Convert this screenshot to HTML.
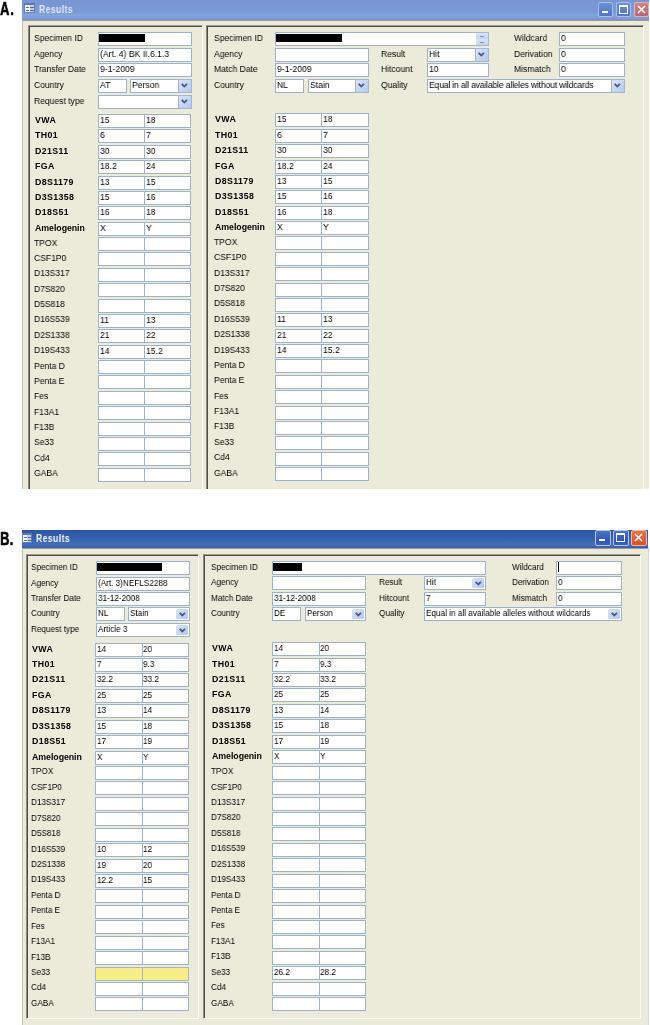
<!DOCTYPE html><html><head><meta charset="utf-8"><title>Results</title><style>
*{margin:0;padding:0;box-sizing:border-box}
html,body{width:650px;height:1025px;overflow:hidden;background:#fff;position:relative;font-family:"Liberation Sans", sans-serif}
.lb,.t,.ttext,.lab{will-change:transform}
div{position:absolute}
.title.inact{background:linear-gradient(#7896D2,#7A98D3 55%,#82A6DB 78%,#7A92D0)}
.title.act{background:linear-gradient(#2D55A6,#3762B0 50%,#4070B9 80%,#3A5EB0)}
.ttext{font-size:10px;font-weight:bold;white-space:nowrap;line-height:12px;transform:scaleX(0.86);transform-origin:0 0;letter-spacing:0.5px}
.inactt{color:#E2EAF8}
.actt{color:#F6F8FC}
.body{background:#ECEBDA;border-top:1px solid #9C9A8C;border-left:1px solid #C4C2B8}
.panel{border-left:1px solid #8A887C;border-top:1px solid #A09E91;border-right:1px solid #FCFCF8;border-bottom:1px solid #FCFCF8;box-shadow:inset 1px 1px 0 #4F4D45}
.lb{font-size:9.2px;color:#000;white-space:nowrap;line-height:10px;transform-origin:0 0}
.lb.b{font-weight:bold;color:#000;font-size:8.8px;letter-spacing:0.35px}
.bx{background:#fff;border:1px solid #9DB2CB;font-size:9.5px;line-height:10px;color:#000;white-space:nowrap}
.t{position:absolute;left:0.5px;top:0px;transform:scaleX(0.91);transform-origin:0 0}
.t.t2{transform:scaleX(0.86)}
.bx.yel{background:#F6EE88;border-color:#A9B5B8}
.red{position:absolute;left:0px;top:1px;height:8px;background:#000}
.dd{right:-1px;top:-1px;width:14px;bottom:-1px;background:linear-gradient(135deg,#DCE5F7,#C3D3F0 60%,#B5CAEE);border:1px solid #A3B7D2;border-radius:1px}
.dd .chev{position:absolute;left:2.3px;top:2.5px}
.dd.t2{right:1px;top:1px;width:12px;bottom:1px;border:none;border-radius:1.5px}
.dd.t2 .chev{left:2.9px;top:2.5px}
.spin{right:-1px;top:-1px;width:13px;bottom:-1px;border:1px solid #A5B9D3;border-left:none}
.spin div{position:absolute;left:0;width:12px;height:6px;background:linear-gradient(#DCE5F6,#C4D3EE)}
.spin div:first-child{top:0}
.spin div:last-child{top:6px}
.spin i{position:absolute;left:4px;top:2.5px;width:4px;height:1px;background:#7E8DB3}
.cur{position:absolute;left:1px;top:0px;width:1.2px;height:10px;background:#000}
.tb{border-radius:2px}
.bmin,.bmax{background:linear-gradient(#6D8ED8,#5275C8);border:1px solid #A9BEEA}
.bclose{background:linear-gradient(#D0848B,#BC6570);border:1px solid #E2B0B6}
.bmin.a,.bmax.a{background:linear-gradient(#4A72CC,#2F58B5 70%,#3A62BC);border:1px solid #B5C6EA}
.bclose.a{background:linear-gradient(#EC7045,#D9502A);border:1px solid #F2B8A0}
.gmin{left:2.8px;top:8px;width:6px;height:2px;background:#fff}
.gmax{left:2.3px;top:2px;width:9px;height:9px;border:1px solid #fff;border-top-width:2px}
.ico{height:10px;background:linear-gradient(90deg,#F2F5FA 50%,#C4CCDA 50%);border:1px solid #6580BE;border-top:2px solid #5A78C0}
.ico div{position:absolute;height:1px;background:#5A6A90}
.i1{left:1px;top:2px;width:3px} .i2{left:5px;top:2px;width:4px} .i3{left:1px;top:5px;width:3px} .i4{left:5px;top:5px;width:4px}
.lab{font-size:18px;font-weight:bold;color:#000;transform:scaleX(0.72);transform-origin:0 0;line-height:20px;letter-spacing:1.2px;-webkit-text-stroke:0.5px #000}
</style></head><body>
<div class="lab" style="left:-0.5px;top:-0.8px">A.</div>
<div class="lab" style="left:-0.3px;top:528.7px;letter-spacing:0.6px">B.</div>
<div class="title inact" style="left:22px;top:0px;width:627px;height:20px"></div>
<div class="ttext inactt" style="left:39px;top:3.5px">Results</div>
<div class="ico" style="left:24px;top:3px;width:11px"><div class="i1"></div><div class="i2"></div><div class="i3"></div><div class="i4"></div></div>
<div class="body" style="left:22px;top:20px;width:627px;height:469px;"></div>
<div class="panel" style="left:28px;top:25px;width:175px;height:464px;border-bottom:none"></div>
<div class="panel" style="left:206px;top:25px;width:438px;height:464px;border-bottom:none"></div>
<div class="lb" style="left:33.8px;top:32.5px;transform:scaleX(0.93);">Specimen ID</div>
<div class="lb" style="left:33.8px;top:48.5px;transform:scaleX(0.93);">Agency</div>
<div class="lb" style="left:33.8px;top:63.5px;transform:scaleX(0.93);">Transfer Date</div>
<div class="lb" style="left:33.8px;top:79.5px;transform:scaleX(0.93);">Country</div>
<div class="lb" style="left:33.8px;top:95.5px;transform:scaleX(0.93);">Request type</div>
<div class="bx" style="left:98px;top:32px;width:94px;height:14px;"><div class="red" style="width:46px"></div></div>
<div class="bx" style="left:98px;top:48px;width:94px;height:14px;"><span class="t">(Art. 4) BK II.6.1.3</span></div>
<div class="bx" style="left:98px;top:63px;width:94px;height:14px;"><span class="t">9-1-2009</span></div>
<div class="bx" style="left:98px;top:79px;width:29px;height:14px;"><span class="t">AT</span></div>
<div class="bx" style="left:130px;top:79px;width:62px;height:14px"><span class="t">Person</span><div class="dd"><svg width="8" height="6" viewBox="0 0 8 6" class="chev"><path d="M0.6 0.8 L3.3 3.5 L6 0.8" stroke="#4A5B80" stroke-width="1.8" fill="none"/></svg></div></div>
<div class="bx" style="left:98px;top:95px;width:94px;height:14px"><div class="dd"><svg width="8" height="6" viewBox="0 0 8 6" class="chev"><path d="M0.6 0.8 L3.3 3.5 L6 0.8" stroke="#4A5B80" stroke-width="1.8" fill="none"/></svg></div></div>
<div class="lb" style="left:213.8px;top:32.5px;transform:scaleX(0.93);">Specimen ID</div>
<div class="lb" style="left:213.8px;top:48.5px;transform:scaleX(0.93);">Agency</div>
<div class="lb" style="left:213.8px;top:63.5px;transform:scaleX(0.93);">Match Date</div>
<div class="lb" style="left:213.8px;top:79.5px;transform:scaleX(0.93);">Country</div>
<div class="bx" style="left:275px;top:32px;width:214px;height:14px;"><div class="red" style="width:66px"></div><div class="spin"><div><i></i></div><div><i></i></div></div></div>
<div class="bx" style="left:275px;top:48px;width:94px;height:14px;"></div>
<div class="bx" style="left:275px;top:63px;width:94px;height:14px;"><span class="t">9-1-2009</span></div>
<div class="bx" style="left:275px;top:79px;width:29px;height:14px;"><span class="t">NL</span></div>
<div class="bx" style="left:308px;top:79px;width:61px;height:14px"><span class="t">Stain</span><div class="dd"><svg width="8" height="6" viewBox="0 0 8 6" class="chev"><path d="M0.6 0.8 L3.3 3.5 L6 0.8" stroke="#4A5B80" stroke-width="1.8" fill="none"/></svg></div></div>
<div class="lb" style="left:381px;top:48.5px;transform:scaleX(0.93);">Result</div>
<div class="lb" style="left:381px;top:63.5px;transform:scaleX(0.93);">Hitcount</div>
<div class="lb" style="left:381px;top:79.5px;transform:scaleX(0.93);">Quality</div>
<div class="bx" style="left:427px;top:48px;width:62px;height:14px"><span class="t">Hit</span><div class="dd"><svg width="8" height="6" viewBox="0 0 8 6" class="chev"><path d="M0.6 0.8 L3.3 3.5 L6 0.8" stroke="#4A5B80" stroke-width="1.8" fill="none"/></svg></div></div>
<div class="bx" style="left:427px;top:63px;width:62px;height:14px;"><span class="t">10</span></div>
<div class="bx" style="left:427px;top:79px;width:198px;height:14px"><span class="t"><span style="letter-spacing:-0.22px">Equal in all available alleles without wildcards</span></span><div class="dd"><svg width="8" height="6" viewBox="0 0 8 6" class="chev"><path d="M0.6 0.8 L3.3 3.5 L6 0.8" stroke="#4A5B80" stroke-width="1.8" fill="none"/></svg></div></div>
<div class="lb" style="left:514px;top:32.5px;transform:scaleX(0.93);">Wildcard</div>
<div class="lb" style="left:514px;top:48.5px;transform:scaleX(0.93);">Derivation</div>
<div class="lb" style="left:514px;top:63.5px;transform:scaleX(0.93);">Mismatch</div>
<div class="bx" style="left:559px;top:32px;width:66px;height:14px;"><span class="t">0</span></div>
<div class="bx" style="left:559px;top:48px;width:66px;height:14px;"><span class="t">0</span></div>
<div class="bx" style="left:559px;top:63px;width:66px;height:14px;"><span class="t">0</span></div>
<div class="lb b" style="left:34.5px;top:115.0px;">VWA</div>
<div class="bx" style="left:98px;top:114.0px;width:47px;height:14.0px;"><span class="t">15</span></div>
<div class="bx" style="left:144px;top:114.0px;width:47px;height:14.0px;"><span class="t">18</span></div>
<div class="lb b" style="left:214.5px;top:114.4px;">VWA</div>
<div class="bx" style="left:275px;top:113.4px;width:47px;height:14.0px;"><span class="t">15</span></div>
<div class="bx" style="left:321px;top:113.4px;width:48px;height:14.0px;"><span class="t">18</span></div>
<div class="lb b" style="left:34.5px;top:130.38px;">TH01</div>
<div class="bx" style="left:98px;top:129.38px;width:47px;height:14.0px;"><span class="t">6</span></div>
<div class="bx" style="left:144px;top:129.38px;width:47px;height:14.0px;"><span class="t">7</span></div>
<div class="lb b" style="left:214.5px;top:129.78px;">TH01</div>
<div class="bx" style="left:275px;top:128.78px;width:47px;height:14.0px;"><span class="t">6</span></div>
<div class="bx" style="left:321px;top:128.78px;width:48px;height:14.0px;"><span class="t">7</span></div>
<div class="lb b" style="left:34.5px;top:145.75px;">D21S11</div>
<div class="bx" style="left:98px;top:144.75px;width:47px;height:14.0px;"><span class="t">30</span></div>
<div class="bx" style="left:144px;top:144.75px;width:47px;height:14.0px;"><span class="t">30</span></div>
<div class="lb b" style="left:214.5px;top:145.15px;">D21S11</div>
<div class="bx" style="left:275px;top:144.15px;width:47px;height:14.0px;"><span class="t">30</span></div>
<div class="bx" style="left:321px;top:144.15px;width:48px;height:14.0px;"><span class="t">30</span></div>
<div class="lb b" style="left:34.5px;top:161.12px;">FGA</div>
<div class="bx" style="left:98px;top:160.12px;width:47px;height:14.0px;"><span class="t">18.2</span></div>
<div class="bx" style="left:144px;top:160.12px;width:47px;height:14.0px;"><span class="t">24</span></div>
<div class="lb b" style="left:214.5px;top:160.53px;">FGA</div>
<div class="bx" style="left:275px;top:159.53px;width:47px;height:14.0px;"><span class="t">18.2</span></div>
<div class="bx" style="left:321px;top:159.53px;width:48px;height:14.0px;"><span class="t">24</span></div>
<div class="lb b" style="left:34.5px;top:176.5px;">D8S1179</div>
<div class="bx" style="left:98px;top:175.5px;width:47px;height:14.0px;"><span class="t">13</span></div>
<div class="bx" style="left:144px;top:175.5px;width:47px;height:14.0px;"><span class="t">15</span></div>
<div class="lb b" style="left:214.5px;top:175.9px;">D8S1179</div>
<div class="bx" style="left:275px;top:174.9px;width:47px;height:14.0px;"><span class="t">13</span></div>
<div class="bx" style="left:321px;top:174.9px;width:48px;height:14.0px;"><span class="t">15</span></div>
<div class="lb b" style="left:34.5px;top:191.88px;">D3S1358</div>
<div class="bx" style="left:98px;top:190.88px;width:47px;height:14.0px;"><span class="t">15</span></div>
<div class="bx" style="left:144px;top:190.88px;width:47px;height:14.0px;"><span class="t">16</span></div>
<div class="lb b" style="left:214.5px;top:191.28px;">D3S1358</div>
<div class="bx" style="left:275px;top:190.28px;width:47px;height:14.0px;"><span class="t">15</span></div>
<div class="bx" style="left:321px;top:190.28px;width:48px;height:14.0px;"><span class="t">16</span></div>
<div class="lb b" style="left:34.5px;top:207.25px;">D18S51</div>
<div class="bx" style="left:98px;top:206.25px;width:47px;height:14.0px;"><span class="t">16</span></div>
<div class="bx" style="left:144px;top:206.25px;width:47px;height:14.0px;"><span class="t">18</span></div>
<div class="lb b" style="left:214.5px;top:206.65px;">D18S51</div>
<div class="bx" style="left:275px;top:205.65px;width:47px;height:14.0px;"><span class="t">16</span></div>
<div class="bx" style="left:321px;top:205.65px;width:48px;height:14.0px;"><span class="t">18</span></div>
<div class="lb b" style="left:34.5px;top:222.62px;letter-spacing:-0.05px;">Amelogenin</div>
<div class="bx" style="left:98px;top:221.62px;width:47px;height:14.0px;"><span class="t">X</span></div>
<div class="bx" style="left:144px;top:221.62px;width:47px;height:14.0px;"><span class="t">Y</span></div>
<div class="lb b" style="left:214.5px;top:222.03px;letter-spacing:-0.05px;">Amelogenin</div>
<div class="bx" style="left:275px;top:221.03px;width:47px;height:14.0px;"><span class="t">X</span></div>
<div class="bx" style="left:321px;top:221.03px;width:48px;height:14.0px;"><span class="t">Y</span></div>
<div class="lb" style="left:33.8px;top:237.5px;transform:scaleX(0.93);">TPOX</div>
<div class="bx" style="left:98px;top:237.0px;width:47px;height:14.0px;"></div>
<div class="bx" style="left:144px;top:237.0px;width:47px;height:14.0px;"></div>
<div class="lb" style="left:213.8px;top:236.9px;transform:scaleX(0.93);">TPOX</div>
<div class="bx" style="left:275px;top:236.4px;width:47px;height:14.0px;"></div>
<div class="bx" style="left:321px;top:236.4px;width:48px;height:14.0px;"></div>
<div class="lb" style="left:33.8px;top:252.88px;transform:scaleX(0.93);">CSF1P0</div>
<div class="bx" style="left:98px;top:252.38px;width:47px;height:14.0px;"></div>
<div class="bx" style="left:144px;top:252.38px;width:47px;height:14.0px;"></div>
<div class="lb" style="left:213.8px;top:252.28px;transform:scaleX(0.93);">CSF1P0</div>
<div class="bx" style="left:275px;top:251.78px;width:47px;height:14.0px;"></div>
<div class="bx" style="left:321px;top:251.78px;width:48px;height:14.0px;"></div>
<div class="lb" style="left:33.8px;top:268.25px;transform:scaleX(0.93);">D13S317</div>
<div class="bx" style="left:98px;top:267.75px;width:47px;height:14.0px;"></div>
<div class="bx" style="left:144px;top:267.75px;width:47px;height:14.0px;"></div>
<div class="lb" style="left:213.8px;top:267.65px;transform:scaleX(0.93);">D13S317</div>
<div class="bx" style="left:275px;top:267.15px;width:47px;height:14.0px;"></div>
<div class="bx" style="left:321px;top:267.15px;width:48px;height:14.0px;"></div>
<div class="lb" style="left:33.8px;top:283.62px;transform:scaleX(0.93);">D7S820</div>
<div class="bx" style="left:98px;top:283.12px;width:47px;height:14.0px;"></div>
<div class="bx" style="left:144px;top:283.12px;width:47px;height:14.0px;"></div>
<div class="lb" style="left:213.8px;top:283.02px;transform:scaleX(0.93);">D7S820</div>
<div class="bx" style="left:275px;top:282.52px;width:47px;height:14.0px;"></div>
<div class="bx" style="left:321px;top:282.52px;width:48px;height:14.0px;"></div>
<div class="lb" style="left:33.8px;top:299.0px;transform:scaleX(0.93);">D5S818</div>
<div class="bx" style="left:98px;top:298.5px;width:47px;height:14.0px;"></div>
<div class="bx" style="left:144px;top:298.5px;width:47px;height:14.0px;"></div>
<div class="lb" style="left:213.8px;top:298.4px;transform:scaleX(0.93);">D5S818</div>
<div class="bx" style="left:275px;top:297.9px;width:47px;height:14.0px;"></div>
<div class="bx" style="left:321px;top:297.9px;width:48px;height:14.0px;"></div>
<div class="lb" style="left:33.8px;top:314.38px;transform:scaleX(0.93);">D16S539</div>
<div class="bx" style="left:98px;top:313.88px;width:47px;height:14.0px;"><span class="t">11</span></div>
<div class="bx" style="left:144px;top:313.88px;width:47px;height:14.0px;"><span class="t">13</span></div>
<div class="lb" style="left:213.8px;top:313.77px;transform:scaleX(0.93);">D16S539</div>
<div class="bx" style="left:275px;top:313.27px;width:47px;height:14.0px;"><span class="t">11</span></div>
<div class="bx" style="left:321px;top:313.27px;width:48px;height:14.0px;"><span class="t">13</span></div>
<div class="lb" style="left:33.8px;top:329.75px;transform:scaleX(0.93);">D2S1338</div>
<div class="bx" style="left:98px;top:329.25px;width:47px;height:14.0px;"><span class="t">21</span></div>
<div class="bx" style="left:144px;top:329.25px;width:47px;height:14.0px;"><span class="t">22</span></div>
<div class="lb" style="left:213.8px;top:329.15px;transform:scaleX(0.93);">D2S1338</div>
<div class="bx" style="left:275px;top:328.65px;width:47px;height:14.0px;"><span class="t">21</span></div>
<div class="bx" style="left:321px;top:328.65px;width:48px;height:14.0px;"><span class="t">22</span></div>
<div class="lb" style="left:33.8px;top:345.12px;transform:scaleX(0.93);">D19S433</div>
<div class="bx" style="left:98px;top:344.62px;width:47px;height:14.0px;"><span class="t">14</span></div>
<div class="bx" style="left:144px;top:344.62px;width:47px;height:14.0px;"><span class="t">15.2</span></div>
<div class="lb" style="left:213.8px;top:344.52px;transform:scaleX(0.93);">D19S433</div>
<div class="bx" style="left:275px;top:344.02px;width:47px;height:14.0px;"><span class="t">14</span></div>
<div class="bx" style="left:321px;top:344.02px;width:48px;height:14.0px;"><span class="t">15.2</span></div>
<div class="lb" style="left:33.8px;top:360.5px;transform:scaleX(0.93);">Penta D</div>
<div class="bx" style="left:98px;top:360.0px;width:47px;height:14.0px;"></div>
<div class="bx" style="left:144px;top:360.0px;width:47px;height:14.0px;"></div>
<div class="lb" style="left:213.8px;top:359.9px;transform:scaleX(0.93);">Penta D</div>
<div class="bx" style="left:275px;top:359.4px;width:47px;height:14.0px;"></div>
<div class="bx" style="left:321px;top:359.4px;width:48px;height:14.0px;"></div>
<div class="lb" style="left:33.8px;top:375.88px;transform:scaleX(0.93);">Penta E</div>
<div class="bx" style="left:98px;top:375.38px;width:47px;height:14.0px;"></div>
<div class="bx" style="left:144px;top:375.38px;width:47px;height:14.0px;"></div>
<div class="lb" style="left:213.8px;top:375.27px;transform:scaleX(0.93);">Penta E</div>
<div class="bx" style="left:275px;top:374.77px;width:47px;height:14.0px;"></div>
<div class="bx" style="left:321px;top:374.77px;width:48px;height:14.0px;"></div>
<div class="lb" style="left:33.8px;top:391.25px;transform:scaleX(0.93);">Fes</div>
<div class="bx" style="left:98px;top:390.75px;width:47px;height:14.0px;"></div>
<div class="bx" style="left:144px;top:390.75px;width:47px;height:14.0px;"></div>
<div class="lb" style="left:213.8px;top:390.65px;transform:scaleX(0.93);">Fes</div>
<div class="bx" style="left:275px;top:390.15px;width:47px;height:14.0px;"></div>
<div class="bx" style="left:321px;top:390.15px;width:48px;height:14.0px;"></div>
<div class="lb" style="left:33.8px;top:406.62px;transform:scaleX(0.93);">F13A1</div>
<div class="bx" style="left:98px;top:406.12px;width:47px;height:14.0px;"></div>
<div class="bx" style="left:144px;top:406.12px;width:47px;height:14.0px;"></div>
<div class="lb" style="left:213.8px;top:406.02px;transform:scaleX(0.93);">F13A1</div>
<div class="bx" style="left:275px;top:405.52px;width:47px;height:14.0px;"></div>
<div class="bx" style="left:321px;top:405.52px;width:48px;height:14.0px;"></div>
<div class="lb" style="left:33.8px;top:422.0px;transform:scaleX(0.93);">F13B</div>
<div class="bx" style="left:98px;top:421.5px;width:47px;height:14.0px;"></div>
<div class="bx" style="left:144px;top:421.5px;width:47px;height:14.0px;"></div>
<div class="lb" style="left:213.8px;top:421.4px;transform:scaleX(0.93);">F13B</div>
<div class="bx" style="left:275px;top:420.9px;width:47px;height:14.0px;"></div>
<div class="bx" style="left:321px;top:420.9px;width:48px;height:14.0px;"></div>
<div class="lb" style="left:33.8px;top:437.38px;transform:scaleX(0.93);">Se33</div>
<div class="bx" style="left:98px;top:436.88px;width:47px;height:14.0px;"></div>
<div class="bx" style="left:144px;top:436.88px;width:47px;height:14.0px;"></div>
<div class="lb" style="left:213.8px;top:436.77px;transform:scaleX(0.93);">Se33</div>
<div class="bx" style="left:275px;top:436.27px;width:47px;height:14.0px;"></div>
<div class="bx" style="left:321px;top:436.27px;width:48px;height:14.0px;"></div>
<div class="lb" style="left:33.8px;top:452.75px;transform:scaleX(0.93);">Cd4</div>
<div class="bx" style="left:98px;top:452.25px;width:47px;height:14.0px;"></div>
<div class="bx" style="left:144px;top:452.25px;width:47px;height:14.0px;"></div>
<div class="lb" style="left:213.8px;top:452.15px;transform:scaleX(0.93);">Cd4</div>
<div class="bx" style="left:275px;top:451.65px;width:47px;height:14.0px;"></div>
<div class="bx" style="left:321px;top:451.65px;width:48px;height:14.0px;"></div>
<div class="lb" style="left:33.8px;top:468.12px;transform:scaleX(0.93);">GABA</div>
<div class="bx" style="left:98px;top:467.62px;width:47px;height:14.0px;"></div>
<div class="bx" style="left:144px;top:467.62px;width:47px;height:14.0px;"></div>
<div class="lb" style="left:213.8px;top:467.52px;transform:scaleX(0.93);">GABA</div>
<div class="bx" style="left:275px;top:467.02px;width:47px;height:14.0px;"></div>
<div class="bx" style="left:321px;top:467.02px;width:48px;height:14.0px;"></div>
<div class="tb bmin" style="left:598px;top:2px;width:15px;height:15px"><div class="gmin"></div></div>
<div class="tb bmax" style="left:616px;top:2px;width:15px;height:15px"><div class="gmax"></div></div>
<div class="tb bclose" style="left:634px;top:2px;width:15px;height:15px"><svg width="15" height="15" viewBox="0 0 15 15" style="position:absolute;left:-1px;top:-1px"><path d="M4 4 L11 11 M11 4 L4 11" stroke="#fff" stroke-width="1.6"/></svg></div>
<div class="title act" style="left:22px;top:530px;width:626px;height:18px"></div>
<div class="ttext actt" style="left:36px;top:533px">Results</div>
<div class="ico" style="left:22px;top:533px;width:10px"><div class="i1"></div><div class="i2"></div><div class="i3"></div><div class="i4"></div></div>
<div class="body" style="left:22px;top:548px;width:627px;height:477px;border-right:1px solid #D3DCEE;"></div>
<div class="panel" style="left:26px;top:554px;width:173px;height:465px;"></div>
<div class="panel" style="left:203px;top:554px;width:438px;height:465px;"></div>
<div class="lb" style="left:31.3px;top:561.5px;transform:scaleX(0.89);">Specimen ID</div>
<div class="lb" style="left:31.3px;top:577.5px;transform:scaleX(0.89);">Agency</div>
<div class="lb" style="left:31.3px;top:592.5px;transform:scaleX(0.89);">Transfer Date</div>
<div class="lb" style="left:31.3px;top:607.7px;transform:scaleX(0.89);">Country</div>
<div class="lb" style="left:31.3px;top:623.7px;transform:scaleX(0.89);">Request type</div>
<div class="bx" style="left:96px;top:561px;width:94px;height:14px;"><div class="red" style="width:65px"></div></div>
<div class="bx" style="left:96px;top:577px;width:94px;height:14px;"><span class="t t2">(Art. 3)NEFLS2288</span></div>
<div class="bx" style="left:96px;top:592px;width:94px;height:14px;"><span class="t t2">31-12-2008</span></div>
<div class="bx" style="left:96px;top:607.2px;width:29px;height:14.0px;"><span class="t t2">NL</span></div>
<div class="bx" style="left:128px;top:607.2px;width:62px;height:14.0px"><span class="t t2">Stain</span><div class="dd t2"><svg width="8" height="6" viewBox="0 0 8 6" class="chev"><path d="M0.6 0.8 L3.3 3.5 L6 0.8" stroke="#4A5B80" stroke-width="1.8" fill="none"/></svg></div></div>
<div class="bx" style="left:96px;top:623.2px;width:94px;height:14.0px"><span class="t t2">Article 3</span><div class="dd t2"><svg width="8" height="6" viewBox="0 0 8 6" class="chev"><path d="M0.6 0.8 L3.3 3.5 L6 0.8" stroke="#4A5B80" stroke-width="1.8" fill="none"/></svg></div></div>
<div class="lb" style="left:210.8px;top:561.5px;transform:scaleX(0.89);">Specimen ID</div>
<div class="lb" style="left:210.8px;top:576.7px;transform:scaleX(0.89);">Agency</div>
<div class="lb" style="left:210.8px;top:592.5px;transform:scaleX(0.89);">Match Date</div>
<div class="lb" style="left:210.8px;top:607.8px;transform:scaleX(0.89);">Country</div>
<div class="bx" style="left:272px;top:561px;width:214px;height:14px;"><div class="red" style="width:29px"></div></div>
<div class="bx" style="left:272px;top:576.2px;width:94px;height:14.0px;"></div>
<div class="bx" style="left:272px;top:592px;width:94px;height:14px;"><span class="t t2">31-12-2008</span></div>
<div class="bx" style="left:272px;top:607.3px;width:29px;height:14.0px;"><span class="t t2">DE</span></div>
<div class="bx" style="left:305px;top:607.3px;width:61px;height:14.0px"><span class="t t2">Person</span><div class="dd t2"><svg width="8" height="6" viewBox="0 0 8 6" class="chev"><path d="M0.6 0.8 L3.3 3.5 L6 0.8" stroke="#4A5B80" stroke-width="1.8" fill="none"/></svg></div></div>
<div class="lb" style="left:379px;top:576.7px;transform:scaleX(0.89);">Result</div>
<div class="lb" style="left:379px;top:592.5px;transform:scaleX(0.89);">Hitcount</div>
<div class="lb" style="left:379px;top:607.8px;transform:scaleX(0.89);">Quality</div>
<div class="bx" style="left:424px;top:576.2px;width:62px;height:14.0px"><span class="t t2">Hit</span><div class="dd t2"><svg width="8" height="6" viewBox="0 0 8 6" class="chev"><path d="M0.6 0.8 L3.3 3.5 L6 0.8" stroke="#4A5B80" stroke-width="1.8" fill="none"/></svg></div></div>
<div class="bx" style="left:424px;top:592px;width:62px;height:14px;"><span class="t t2">7</span></div>
<div class="bx" style="left:424px;top:607.3px;width:198px;height:14.0px"><span class="t t2">Equal in all available alleles without wildcards</span><div class="dd t2"><svg width="8" height="6" viewBox="0 0 8 6" class="chev"><path d="M0.6 0.8 L3.3 3.5 L6 0.8" stroke="#4A5B80" stroke-width="1.8" fill="none"/></svg></div></div>
<div class="lb" style="left:511.5px;top:561.5px;transform:scaleX(0.89);">Wildcard</div>
<div class="lb" style="left:511.5px;top:576.7px;transform:scaleX(0.89);">Derivation</div>
<div class="lb" style="left:511.5px;top:592.5px;transform:scaleX(0.89);">Mismatch</div>
<div class="bx" style="left:556px;top:561px;width:66px;height:14px;"><span class="cur"></span></div>
<div class="bx" style="left:556px;top:576.2px;width:66px;height:14.0px;"><span class="t t2">0</span></div>
<div class="bx" style="left:556px;top:592px;width:66px;height:14px;"><span class="t t2">0</span></div>
<div class="lb b" style="left:32.0px;top:643.5px;">VWA</div>
<div class="bx" style="left:95px;top:642.5px;width:47.6px;height:14.0px;"><span class="t t2">14</span></div>
<div class="bx" style="left:141.6px;top:642.5px;width:47.4px;height:14.0px;"><span class="t t2">20</span></div>
<div class="lb b" style="left:211.5px;top:643.2px;">VWA</div>
<div class="bx" style="left:272px;top:642.2px;width:47.5px;height:14.0px;"><span class="t t2">14</span></div>
<div class="bx" style="left:318.5px;top:642.2px;width:47.0px;height:14.0px;"><span class="t t2">20</span></div>
<div class="lb b" style="left:32.0px;top:658.93px;">TH01</div>
<div class="bx" style="left:95px;top:657.93px;width:47.6px;height:14.0px;"><span class="t t2">7</span></div>
<div class="bx" style="left:141.6px;top:657.93px;width:47.4px;height:14.0px;"><span class="t t2">9.3</span></div>
<div class="lb b" style="left:211.5px;top:658.63px;">TH01</div>
<div class="bx" style="left:272px;top:657.63px;width:47.5px;height:14.0px;"><span class="t t2">7</span></div>
<div class="bx" style="left:318.5px;top:657.63px;width:47.0px;height:14.0px;"><span class="t t2">9.3</span></div>
<div class="lb b" style="left:32.0px;top:674.36px;">D21S11</div>
<div class="bx" style="left:95px;top:673.36px;width:47.6px;height:14.0px;"><span class="t t2">32.2</span></div>
<div class="bx" style="left:141.6px;top:673.36px;width:47.4px;height:14.0px;"><span class="t t2">33.2</span></div>
<div class="lb b" style="left:211.5px;top:674.06px;">D21S11</div>
<div class="bx" style="left:272px;top:673.06px;width:47.5px;height:14.0px;"><span class="t t2">32.2</span></div>
<div class="bx" style="left:318.5px;top:673.06px;width:47.0px;height:14.0px;"><span class="t t2">33.2</span></div>
<div class="lb b" style="left:32.0px;top:689.79px;">FGA</div>
<div class="bx" style="left:95px;top:688.79px;width:47.6px;height:14.0px;"><span class="t t2">25</span></div>
<div class="bx" style="left:141.6px;top:688.79px;width:47.4px;height:14.0px;"><span class="t t2">25</span></div>
<div class="lb b" style="left:211.5px;top:689.49px;">FGA</div>
<div class="bx" style="left:272px;top:688.49px;width:47.5px;height:14.0px;"><span class="t t2">25</span></div>
<div class="bx" style="left:318.5px;top:688.49px;width:47.0px;height:14.0px;"><span class="t t2">25</span></div>
<div class="lb b" style="left:32.0px;top:705.22px;">D8S1179</div>
<div class="bx" style="left:95px;top:704.22px;width:47.6px;height:14.0px;"><span class="t t2">13</span></div>
<div class="bx" style="left:141.6px;top:704.22px;width:47.4px;height:14.0px;"><span class="t t2">14</span></div>
<div class="lb b" style="left:211.5px;top:704.92px;">D8S1179</div>
<div class="bx" style="left:272px;top:703.92px;width:47.5px;height:14.0px;"><span class="t t2">13</span></div>
<div class="bx" style="left:318.5px;top:703.92px;width:47.0px;height:14.0px;"><span class="t t2">14</span></div>
<div class="lb b" style="left:32.0px;top:720.65px;">D3S1358</div>
<div class="bx" style="left:95px;top:719.65px;width:47.6px;height:14.0px;"><span class="t t2">15</span></div>
<div class="bx" style="left:141.6px;top:719.65px;width:47.4px;height:14.0px;"><span class="t t2">18</span></div>
<div class="lb b" style="left:211.5px;top:720.35px;">D3S1358</div>
<div class="bx" style="left:272px;top:719.35px;width:47.5px;height:14.0px;"><span class="t t2">15</span></div>
<div class="bx" style="left:318.5px;top:719.35px;width:47.0px;height:14.0px;"><span class="t t2">18</span></div>
<div class="lb b" style="left:32.0px;top:736.08px;">D18S51</div>
<div class="bx" style="left:95px;top:735.08px;width:47.6px;height:14.0px;"><span class="t t2">17</span></div>
<div class="bx" style="left:141.6px;top:735.08px;width:47.4px;height:14.0px;"><span class="t t2">19</span></div>
<div class="lb b" style="left:211.5px;top:735.78px;">D18S51</div>
<div class="bx" style="left:272px;top:734.78px;width:47.5px;height:14.0px;"><span class="t t2">17</span></div>
<div class="bx" style="left:318.5px;top:734.78px;width:47.0px;height:14.0px;"><span class="t t2">19</span></div>
<div class="lb b" style="left:32.0px;top:751.51px;letter-spacing:-0.05px;">Amelogenin</div>
<div class="bx" style="left:95px;top:750.51px;width:47.6px;height:14.0px;"><span class="t t2">X</span></div>
<div class="bx" style="left:141.6px;top:750.51px;width:47.4px;height:14.0px;"><span class="t t2">Y</span></div>
<div class="lb b" style="left:211.5px;top:751.21px;letter-spacing:-0.05px;">Amelogenin</div>
<div class="bx" style="left:272px;top:750.21px;width:47.5px;height:14.0px;"><span class="t t2">X</span></div>
<div class="bx" style="left:318.5px;top:750.21px;width:47.0px;height:14.0px;"><span class="t t2">Y</span></div>
<div class="lb" style="left:31.3px;top:766.44px;transform:scaleX(0.89);">TPOX</div>
<div class="bx" style="left:95px;top:765.94px;width:47.6px;height:14.0px;"></div>
<div class="bx" style="left:141.6px;top:765.94px;width:47.4px;height:14.0px;"></div>
<div class="lb" style="left:210.8px;top:766.14px;transform:scaleX(0.89);">TPOX</div>
<div class="bx" style="left:272px;top:765.64px;width:47.5px;height:14.0px;"></div>
<div class="bx" style="left:318.5px;top:765.64px;width:47.0px;height:14.0px;"></div>
<div class="lb" style="left:31.3px;top:781.87px;transform:scaleX(0.89);">CSF1P0</div>
<div class="bx" style="left:95px;top:781.37px;width:47.6px;height:14.0px;"></div>
<div class="bx" style="left:141.6px;top:781.37px;width:47.4px;height:14.0px;"></div>
<div class="lb" style="left:210.8px;top:781.57px;transform:scaleX(0.89);">CSF1P0</div>
<div class="bx" style="left:272px;top:781.07px;width:47.5px;height:14.0px;"></div>
<div class="bx" style="left:318.5px;top:781.07px;width:47.0px;height:14.0px;"></div>
<div class="lb" style="left:31.3px;top:797.3px;transform:scaleX(0.89);">D13S317</div>
<div class="bx" style="left:95px;top:796.8px;width:47.6px;height:14.0px;"></div>
<div class="bx" style="left:141.6px;top:796.8px;width:47.4px;height:14.0px;"></div>
<div class="lb" style="left:210.8px;top:797.0px;transform:scaleX(0.89);">D13S317</div>
<div class="bx" style="left:272px;top:796.5px;width:47.5px;height:14.0px;"></div>
<div class="bx" style="left:318.5px;top:796.5px;width:47.0px;height:14.0px;"></div>
<div class="lb" style="left:31.3px;top:812.73px;transform:scaleX(0.89);">D7S820</div>
<div class="bx" style="left:95px;top:812.23px;width:47.6px;height:14.0px;"></div>
<div class="bx" style="left:141.6px;top:812.23px;width:47.4px;height:14.0px;"></div>
<div class="lb" style="left:210.8px;top:812.43px;transform:scaleX(0.89);">D7S820</div>
<div class="bx" style="left:272px;top:811.93px;width:47.5px;height:14.0px;"></div>
<div class="bx" style="left:318.5px;top:811.93px;width:47.0px;height:14.0px;"></div>
<div class="lb" style="left:31.3px;top:828.16px;transform:scaleX(0.89);">D5S818</div>
<div class="bx" style="left:95px;top:827.66px;width:47.6px;height:14.0px;"></div>
<div class="bx" style="left:141.6px;top:827.66px;width:47.4px;height:14.0px;"></div>
<div class="lb" style="left:210.8px;top:827.86px;transform:scaleX(0.89);">D5S818</div>
<div class="bx" style="left:272px;top:827.36px;width:47.5px;height:14.0px;"></div>
<div class="bx" style="left:318.5px;top:827.36px;width:47.0px;height:14.0px;"></div>
<div class="lb" style="left:31.3px;top:843.59px;transform:scaleX(0.89);">D16S539</div>
<div class="bx" style="left:95px;top:843.09px;width:47.6px;height:14.0px;"><span class="t t2">10</span></div>
<div class="bx" style="left:141.6px;top:843.09px;width:47.4px;height:14.0px;"><span class="t t2">12</span></div>
<div class="lb" style="left:210.8px;top:843.29px;transform:scaleX(0.89);">D16S539</div>
<div class="bx" style="left:272px;top:842.79px;width:47.5px;height:14.0px;"></div>
<div class="bx" style="left:318.5px;top:842.79px;width:47.0px;height:14.0px;"></div>
<div class="lb" style="left:31.3px;top:859.02px;transform:scaleX(0.89);">D2S1338</div>
<div class="bx" style="left:95px;top:858.52px;width:47.6px;height:14.0px;"><span class="t t2">19</span></div>
<div class="bx" style="left:141.6px;top:858.52px;width:47.4px;height:14.0px;"><span class="t t2">20</span></div>
<div class="lb" style="left:210.8px;top:858.72px;transform:scaleX(0.89);">D2S1338</div>
<div class="bx" style="left:272px;top:858.22px;width:47.5px;height:14.0px;"></div>
<div class="bx" style="left:318.5px;top:858.22px;width:47.0px;height:14.0px;"></div>
<div class="lb" style="left:31.3px;top:874.45px;transform:scaleX(0.89);">D19S433</div>
<div class="bx" style="left:95px;top:873.95px;width:47.6px;height:14.0px;"><span class="t t2">12.2</span></div>
<div class="bx" style="left:141.6px;top:873.95px;width:47.4px;height:14.0px;"><span class="t t2">15</span></div>
<div class="lb" style="left:210.8px;top:874.15px;transform:scaleX(0.89);">D19S433</div>
<div class="bx" style="left:272px;top:873.65px;width:47.5px;height:14.0px;"></div>
<div class="bx" style="left:318.5px;top:873.65px;width:47.0px;height:14.0px;"></div>
<div class="lb" style="left:31.3px;top:889.88px;transform:scaleX(0.89);">Penta D</div>
<div class="bx" style="left:95px;top:889.38px;width:47.6px;height:14.0px;"></div>
<div class="bx" style="left:141.6px;top:889.38px;width:47.4px;height:14.0px;"></div>
<div class="lb" style="left:210.8px;top:889.58px;transform:scaleX(0.89);">Penta D</div>
<div class="bx" style="left:272px;top:889.08px;width:47.5px;height:14.0px;"></div>
<div class="bx" style="left:318.5px;top:889.08px;width:47.0px;height:14.0px;"></div>
<div class="lb" style="left:31.3px;top:905.31px;transform:scaleX(0.89);">Penta E</div>
<div class="bx" style="left:95px;top:904.81px;width:47.6px;height:14.0px;"></div>
<div class="bx" style="left:141.6px;top:904.81px;width:47.4px;height:14.0px;"></div>
<div class="lb" style="left:210.8px;top:905.01px;transform:scaleX(0.89);">Penta E</div>
<div class="bx" style="left:272px;top:904.51px;width:47.5px;height:14.0px;"></div>
<div class="bx" style="left:318.5px;top:904.51px;width:47.0px;height:14.0px;"></div>
<div class="lb" style="left:31.3px;top:920.74px;transform:scaleX(0.89);">Fes</div>
<div class="bx" style="left:95px;top:920.24px;width:47.6px;height:14.0px;"></div>
<div class="bx" style="left:141.6px;top:920.24px;width:47.4px;height:14.0px;"></div>
<div class="lb" style="left:210.8px;top:920.44px;transform:scaleX(0.89);">Fes</div>
<div class="bx" style="left:272px;top:919.94px;width:47.5px;height:14.0px;"></div>
<div class="bx" style="left:318.5px;top:919.94px;width:47.0px;height:14.0px;"></div>
<div class="lb" style="left:31.3px;top:936.17px;transform:scaleX(0.89);">F13A1</div>
<div class="bx" style="left:95px;top:935.67px;width:47.6px;height:14.0px;"></div>
<div class="bx" style="left:141.6px;top:935.67px;width:47.4px;height:14.0px;"></div>
<div class="lb" style="left:210.8px;top:935.87px;transform:scaleX(0.89);">F13A1</div>
<div class="bx" style="left:272px;top:935.37px;width:47.5px;height:14.0px;"></div>
<div class="bx" style="left:318.5px;top:935.37px;width:47.0px;height:14.0px;"></div>
<div class="lb" style="left:31.3px;top:951.6px;transform:scaleX(0.89);">F13B</div>
<div class="bx" style="left:95px;top:951.1px;width:47.6px;height:14.0px;"></div>
<div class="bx" style="left:141.6px;top:951.1px;width:47.4px;height:14.0px;"></div>
<div class="lb" style="left:210.8px;top:951.3px;transform:scaleX(0.89);">F13B</div>
<div class="bx" style="left:272px;top:950.8px;width:47.5px;height:14.0px;"></div>
<div class="bx" style="left:318.5px;top:950.8px;width:47.0px;height:14.0px;"></div>
<div class="lb" style="left:31.3px;top:967.03px;transform:scaleX(0.89);">Se33</div>
<div class="bx yel" style="left:95px;top:966.53px;width:47.6px;height:14.0px;"></div>
<div class="bx yel" style="left:141.6px;top:966.53px;width:47.4px;height:14.0px;"></div>
<div class="lb" style="left:210.8px;top:966.73px;transform:scaleX(0.89);">Se33</div>
<div class="bx" style="left:272px;top:966.23px;width:47.5px;height:14.0px;"><span class="t t2">26.2</span></div>
<div class="bx" style="left:318.5px;top:966.23px;width:47.0px;height:14.0px;"><span class="t t2">28.2</span></div>
<div class="lb" style="left:31.3px;top:982.46px;transform:scaleX(0.89);">Cd4</div>
<div class="bx" style="left:95px;top:981.96px;width:47.6px;height:14.0px;"></div>
<div class="bx" style="left:141.6px;top:981.96px;width:47.4px;height:14.0px;"></div>
<div class="lb" style="left:210.8px;top:982.16px;transform:scaleX(0.89);">Cd4</div>
<div class="bx" style="left:272px;top:981.66px;width:47.5px;height:14.0px;"></div>
<div class="bx" style="left:318.5px;top:981.66px;width:47.0px;height:14.0px;"></div>
<div class="lb" style="left:31.3px;top:997.89px;transform:scaleX(0.89);">GABA</div>
<div class="bx" style="left:95px;top:997.39px;width:47.6px;height:14.0px;"></div>
<div class="bx" style="left:141.6px;top:997.39px;width:47.4px;height:14.0px;"></div>
<div class="lb" style="left:210.8px;top:997.59px;transform:scaleX(0.89);">GABA</div>
<div class="bx" style="left:272px;top:997.09px;width:47.5px;height:14.0px;"></div>
<div class="bx" style="left:318.5px;top:997.09px;width:47.0px;height:14.0px;"></div>
<div class="tb bmin a" style="left:595px;top:530px;width:16px;height:16px"><div class="gmin"></div></div>
<div class="tb bmax a" style="left:613px;top:530px;width:16px;height:16px"><div class="gmax"></div></div>
<div class="tb bclose a" style="left:631px;top:530px;width:16px;height:16px"><svg width="15" height="15" viewBox="0 0 15 15" style="position:absolute;left:-1px;top:-1px"><path d="M4 4 L11 11 M11 4 L4 11" stroke="#fff" stroke-width="1.6"/></svg></div>
</body></html>
